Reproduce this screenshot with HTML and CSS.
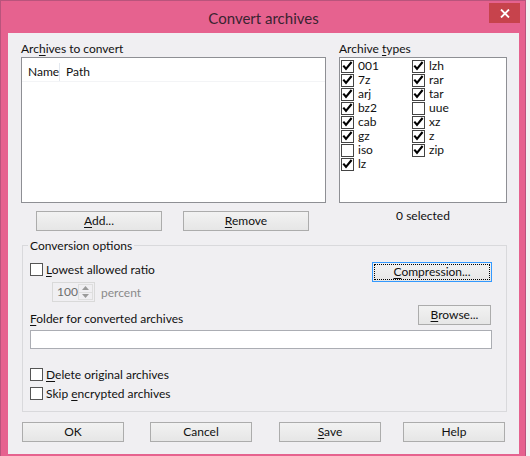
FILE: index.html
```html
<!DOCTYPE html>
<html>
<head>
<meta charset="utf-8">
<title>Convert archives</title>
<link rel="stylesheet" href="styles.css">
</head>
<body>
<div class="window">
  <div class="titlebar">
    <span class="title">Convert archives</span>
    <div class="close">
      <svg width="10" height="9" viewBox="0 0 10 9"><path d="M1 0.5 L9 8.5 M9 0.5 L1 8.5" stroke="#fff" stroke-width="1.8" fill="none"/></svg>
    </div>
  </div>
  <div class="client">
    <div class="top">
      <div class="col-left">
        <div class="label">Arc<u>h</u>ives to convert</div>
        <div class="listview">
          <div class="lv-header">
            <div class="lv-col lv-name">Name</div>
            <div class="lv-col lv-path">Path</div>
          </div>
        </div>
        <div class="btn-row">
          <button class="btn btn-mid"><u>A</u>dd...</button>
          <button class="btn btn-mid"><u>R</u>emove</button>
        </div>
      </div>
      <div class="col-right">
        <div class="label">Archive <u>t</u>ypes</div>
        <div class="typelist">
          <div class="cb"><span class="box"><svg class="chk" viewBox="0 0 11 11"><path d="M1.3 4.6 L4 7.8 L9.6 1"/></svg></span>001</div>
          <div class="cb"><span class="box"><svg class="chk" viewBox="0 0 11 11"><path d="M1.3 4.6 L4 7.8 L9.6 1"/></svg></span>7z</div>
          <div class="cb"><span class="box"><svg class="chk" viewBox="0 0 11 11"><path d="M1.3 4.6 L4 7.8 L9.6 1"/></svg></span>arj</div>
          <div class="cb"><span class="box"><svg class="chk" viewBox="0 0 11 11"><path d="M1.3 4.6 L4 7.8 L9.6 1"/></svg></span>bz2</div>
          <div class="cb"><span class="box"><svg class="chk" viewBox="0 0 11 11"><path d="M1.3 4.6 L4 7.8 L9.6 1"/></svg></span>cab</div>
          <div class="cb"><span class="box"><svg class="chk" viewBox="0 0 11 11"><path d="M1.3 4.6 L4 7.8 L9.6 1"/></svg></span>gz</div>
          <div class="cb"><span class="box"></span>iso</div>
          <div class="cb"><span class="box"><svg class="chk" viewBox="0 0 11 11"><path d="M1.3 4.6 L4 7.8 L9.6 1"/></svg></span>lz</div>
          <div class="cb"><span class="box"><svg class="chk" viewBox="0 0 11 11"><path d="M1.3 4.6 L4 7.8 L9.6 1"/></svg></span>lzh</div>
          <div class="cb"><span class="box"><svg class="chk" viewBox="0 0 11 11"><path d="M1.3 4.6 L4 7.8 L9.6 1"/></svg></span>rar</div>
          <div class="cb"><span class="box"><svg class="chk" viewBox="0 0 11 11"><path d="M1.3 4.6 L4 7.8 L9.6 1"/></svg></span>tar</div>
          <div class="cb"><span class="box"></span>uue</div>
          <div class="cb"><span class="box"><svg class="chk" viewBox="0 0 11 11"><path d="M1.3 4.6 L4 7.8 L9.6 1"/></svg></span>xz</div>
          <div class="cb"><span class="box"><svg class="chk" viewBox="0 0 11 11"><path d="M1.3 4.6 L4 7.8 L9.6 1"/></svg></span>z</div>
          <div class="cb"><span class="box"><svg class="chk" viewBox="0 0 11 11"><path d="M1.3 4.6 L4 7.8 L9.6 1"/></svg></span>zip</div>
        </div>
        <div class="selected">0 selected</div>
      </div>
    </div>

    <fieldset class="group">
      <legend>Conversion options</legend>
      <div class="row1">
        <div class="cb cb-opt"><span class="box"></span><span><u>L</u>owest allowed ratio</span></div>
        <button class="btn btn-comp btn-focus"><u>C</u>ompression...</button>
      </div>
      <div class="spin-row">
        <div class="spin">
          <span class="spin-val">100</span>
          <span class="spin-btns">
            <span class="spin-b"><svg width="7" height="4" viewBox="0 0 7 4"><path d="M0 4 L3.5 0 L7 4 Z" fill="#9a9a9a"/></svg></span>
            <span class="spin-b"><svg width="7" height="4" viewBox="0 0 7 4"><path d="M0 0 L3.5 4 L7 0 Z" fill="#9a9a9a"/></svg></span>
          </span>
        </div>
        <span class="percent">percent</span>
      </div>
      <div class="folder-row">
        <span class="folder-label"><u>F</u>older for converted archives</span>
        <button class="btn btn-browse"><u>B</u>rowse...</button>
      </div>
      <div class="textbox"></div>
      <div class="cb cb-opt cb-delete"><span class="box"></span><span><u>D</u>elete original archives</span></div>
      <div class="cb cb-opt cb-skip"><span class="box"></span><span>Skip <u>e</u>ncrypted archives</span></div>
    </fieldset>

    <div class="footer">
      <button class="btn btn-wide">OK</button>
      <button class="btn btn-wide btn-cancel">Cancel</button>
      <button class="btn btn-wide btn-save"><u>S</u>ave</button>
      <button class="btn btn-wide btn-help">Help</button>
    </div>
  </div>
</div>
</body>
</html>
```

FILE: styles.css
```css
* { box-sizing: border-box; }

body {
  margin: 0;
  background: #f3f3f3;
  font-family: "Segoe UI", Lato, "Noto Sans", sans-serif;
  font-size: 12px;
  color: #111;
}

u { text-decoration: underline; text-underline-offset: 2px; }

.window {
  width: 526px;
  height: 470px;
  background: #e6628f;
  border: 1px solid #b9547c;
  padding: 0 6px 0 7px;
}

.titlebar {
  height: 32px;
  display: grid;
  grid-template-columns: 1fr auto 1fr;
}

.title {
  grid-column: 2;
  font-size: 15px;
  line-height: 34px;
  color: #3a2431;
}

.close {
  grid-column: 3;
  justify-self: end;
  margin-top: 2px;
  margin-right: -1px;
  width: 31px;
  height: 20px;
  background: #c7434c;
  display: flex;
  align-items: center;
  justify-content: center;
}

.client {
  background: #f0eff2;
  height: 421px;
  padding: 8px 12px 0 13px;
}

.top {
  display: flex;
  gap: 13px;
}

.col-left { width: 305px; }
.col-right { width: 168px; }

.label {
  height: 16px;
  line-height: 16px;
}

.listview {
  height: 146px;
  border: 1px solid #8e8f94;
  background: #fff;
}

.lv-header {
  display: flex;
  padding-top: 5px;
  height: 24px;
  border-bottom: 1px solid #f3f4f6;
}

.lv-col {
  height: 18px;
  line-height: 18px;
  padding-left: 6px;
}

.lv-name {
  width: 38px;
  border-right: 1px solid #e3e8ef;
}

.btn-row {
  display: flex;
  gap: 21px;
  margin-top: 8px;
  padding-left: 15px;
}

.btn {
  height: 20px;
  border: 1px solid #acacac;
  background: linear-gradient(#f2f2f2, #e6e6e6);
  font: inherit;
  color: #111;
  padding: 0;
  line-height: 18px;
}

.btn-mid { width: 126px; }

.typelist {
  height: 146px;
  border: 1px solid #8e8f94;
  background: #fff;
  padding: 1px 0 0 1px;
  display: grid;
  grid-template-columns: 71px 71px;
  grid-template-rows: repeat(8, 14px);
  grid-auto-flow: column;
  align-content: start;
}

.cb {
  display: flex;
  align-items: center;
  height: 14px;
  line-height: 14px;
}

.box {
  width: 13px;
  height: 13px;
  border: 1px solid #444;
  background: #fff;
  margin-right: 4px;
  flex: none;
  display: flex;
}

.chk {
  width: 11px;
  height: 11px;
}

.chk path {
  fill: none;
  stroke: #000;
  stroke-width: 2.1;
}

.selected {
  text-align: center;
  margin-top: 5px;
  line-height: 16px;
}

.group {
  margin: 7px 0 0 1px;
  width: 485px;
  border: 1px solid #d9d9dc;
  padding: 9px 14px 10px 7px;
  min-width: 0;
}

.group legend {
  padding: 0 2px;
  margin-left: -2px;
  line-height: 15px;
}

.row1 {
  display: flex;
  justify-content: space-between;
  align-items: flex-start;
  height: 20px;
}

.cb-opt {
  height: 15px;
  line-height: 15px;
}

.cb-opt .box {
  margin-right: 3px;
  border-color: #555;
}

.btn-comp { width: 120px; }

.btn-focus {
  border-color: #3399ff;
  outline: 1px dotted #000;
  outline-offset: -3px;
}

.spin-row {
  display: flex;
  align-items: center;
  height: 20px;
  margin-left: 22px;
}

.spin {
  width: 43px;
  height: 20px;
  border: 1px solid #d9d9d9;
  display: flex;
  padding: 1px 1px 1px 0;
}

.spin-val {
  flex: 1;
  padding-left: 4px;
  line-height: 16px;
  color: #6d6d6d;
}

.spin-btns {
  width: 15px;
  display: flex;
  flex-direction: column;
  border: 1px solid #dedede;
}

.spin-b {
  flex: 1;
  display: flex;
  align-items: center;
  justify-content: center;
}

.spin-b + .spin-b { border-top: 1px solid #dedede; }

.percent {
  margin-left: 6px;
  color: #8a8a8a;
}

.folder-row {
  display: flex;
  justify-content: space-between;
  align-items: flex-end;
  height: 20px;
  margin-top: 3px;
}

.folder-label {
  line-height: 16px;
  margin-bottom: -2px;
}

.btn-browse {
  width: 73px;
  margin-right: 1px;
}

.textbox {
  margin-top: 5px;
  height: 19px;
  width: 462px;
  border: 1px solid #abadb3;
  background: #fff;
}

.cb-delete { margin-top: 18px; }
.cb-skip { margin-top: 4px; }

.footer {
  display: flex;
  margin: 10px 0 0 1px;
}

.btn-wide { width: 102px; }
.btn-cancel { margin-left: 26px; }
.btn-save { margin-left: 27px; }
.btn-help { margin-left: 22px; }
```
